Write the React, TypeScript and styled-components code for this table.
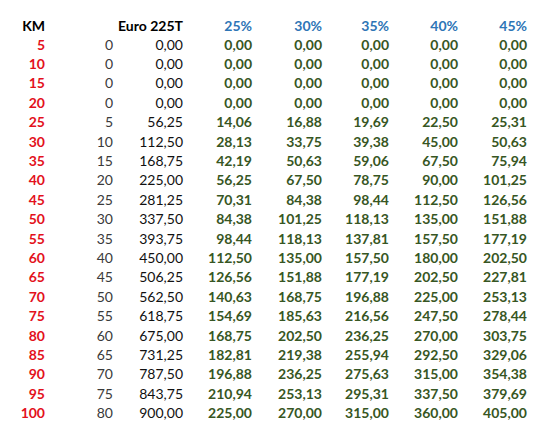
import styled, { createGlobalStyle } from "styled-components";

const GlobalStyle = createGlobalStyle`
  html, body {
    margin: 0;
    padding: 0;
    background: #ffffff;
  }
  body {
    font-family: Lato, "Open Sans", "Liberation Sans", sans-serif;
  }
`;

type Tone = "km" | "base" | "euro" | "pct" | "head" | "headPct";

const tones: Record<Tone, { color: string; weight: number }> = {
  km: { color: "#e3111b", weight: 700 },
  base: { color: "#3a3a3a", weight: 400 },
  euro: { color: "#111111", weight: 400 },
  pct: { color: "#375623", weight: 700 },
  head: { color: "#000000", weight: 700 },
  headPct: { color: "#2e75b6", weight: 700 },
};

const Sheet = styled.div`
  padding-top: 16px;
  width: 542px;
  display: grid;
  grid-template-columns: 45px 68px 70px 69px 70px 67px 69px 69px;
  grid-template-rows: 19px;
  grid-auto-rows: 19.4px;
`;

const Cell = styled.div<{ $tone: Tone }>`
  display: flex;
  align-items: center;
  justify-content: flex-end;
  font-size: 14px;
  line-height: 1;
  white-space: nowrap;
  color: ${({ $tone }) => tones[$tone].color};
  font-weight: ${({ $tone }) => tones[$tone].weight};
`;

const fmt = (n: number) => n.toFixed(2).replace(".", ",");
const rates = [0.25, 0.3, 0.35, 0.4, 0.45];

const rows = Array.from({ length: 20 }, (_, i) => {
  const km = (i + 1) * 5;
  const base = Math.max(0, km - 20);
  const euro = base * 11.25;
  return { km, base, euro };
});

// excel style rounding (half away from zero)
const round2 = (n: number) => Math.round(n * 100 + 1e-7) / 100;

export default function App() {
  return (
    <>
      <GlobalStyle />
      <Sheet>
        <Cell $tone="head">KM</Cell>
        <Cell $tone="head"></Cell>
        <Cell $tone="head">Euro 225T</Cell>
        {rates.map((r) => (
          <Cell key={r} $tone="headPct">
            {Math.round(r * 100)}%
          </Cell>
        ))}
        {rows.map((row) => [
          <Cell key={`k${row.km}`} $tone="km">
            {row.km}
          </Cell>,
          <Cell key={`b${row.km}`} $tone="base">
            {row.base}
          </Cell>,
          <Cell key={`e${row.km}`} $tone="euro">
            {fmt(row.euro)}
          </Cell>,
          ...rates.map((r) => (
            <Cell key={`p${row.km}-${r}`} $tone="pct">
              {fmt(round2(row.euro * r))}
            </Cell>
          )),
        ])}
      </Sheet>
    </>
  );
}
